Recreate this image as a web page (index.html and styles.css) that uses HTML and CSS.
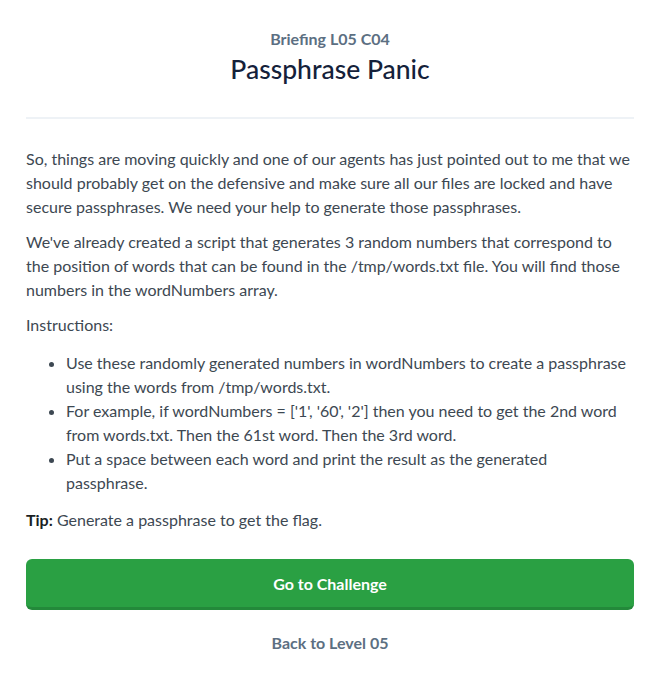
FILE: index.html
```html
<!DOCTYPE html>
<html>
<head>
<meta charset="utf-8">
<link rel="stylesheet" href="styles.css">
</head>
<body>
<div class="page">
  <header class="head">
    <div class="kicker">Briefing L05 C04</div>
    <h1 class="title">Passphrase Panic</h1>
  </header>
  <div class="body">
    <p>So, things are moving quickly and one of our agents has just pointed out to me that we should probably get on the defensive and make sure all our files are locked and have secure passphrases. We need your help to generate those passphrases.</p>
    <p>We've already created a script that generates 3 random numbers that correspond to the position of words that can be found in the /tmp/words.txt file. You will find those numbers in the wordNumbers array.</p>
    <p>Instructions:</p>
    <ul>
      <li>Use these randomly generated numbers in wordNumbers to create a passphrase using the words from /tmp/words.txt.</li>
      <li>For example, if wordNumbers = ['1', '60', '2'] then you need to get the 2nd word from words.txt. Then the 61st word. Then the 3rd word.</li>
      <li>Put a space between each word and print the result as the generated passphrase.</li>
    </ul>
    <p><strong>Tip:</strong> Generate a passphrase to get the flag.</p>
  </div>
  <a class="btn" href="#">Go to Challenge</a>
  <a class="back" href="#">Back to Level 05</a>
</div>
</body>
</html>
```
FILE: styles.css
```css
html, body {
  margin: 0;
  padding: 0;
  background: #fff;
}
body {
  font-family: "Lato", "Open Sans", sans-serif;
  color: #3d4852;
}
.page {
  padding: 28px 27px 0 26px;
  display: flex;
  flex-direction: column;
}
.head {
  text-align: center;
  border-bottom: 2px solid #eef2f6;
  padding-bottom: 32px;
}
.kicker {
  font-size: 16px;
  font-weight: 700;
  color: #5c6f82;
  line-height: 22px;
}
.title {
  margin: 3px 0 0;
  font-size: 26.5px;
  font-weight: 500;
  color: #14213a;
  line-height: 32px;
}
.body {
  padding-top: 28px;
  font-size: 16px;
  line-height: 24px;
}
.body p {
  margin: 0 0 11px;
}
.body ul {
  margin: 14px 0 13px;
  padding-left: 40px;
  padding-right: 5px;
}
.body strong {
  color: #1a1f24;
  font-weight: 700;
}
.btn {
  display: block;
  margin-top: 16px;
  height: 48px;
  line-height: 50px;
  background: #2aa043;
  border-bottom: 3px solid #23893a;
  border-radius: 6px;
  color: #fff;
  font-weight: 700;
  font-size: 16px;
  text-align: center;
  text-decoration: none;
}
.back {
  display: block;
  margin-top: 22px;
  text-align: center;
  color: #5c6f82;
  font-weight: 700;
  font-size: 16px;
  line-height: 22px;
  text-decoration: none;
}
```
